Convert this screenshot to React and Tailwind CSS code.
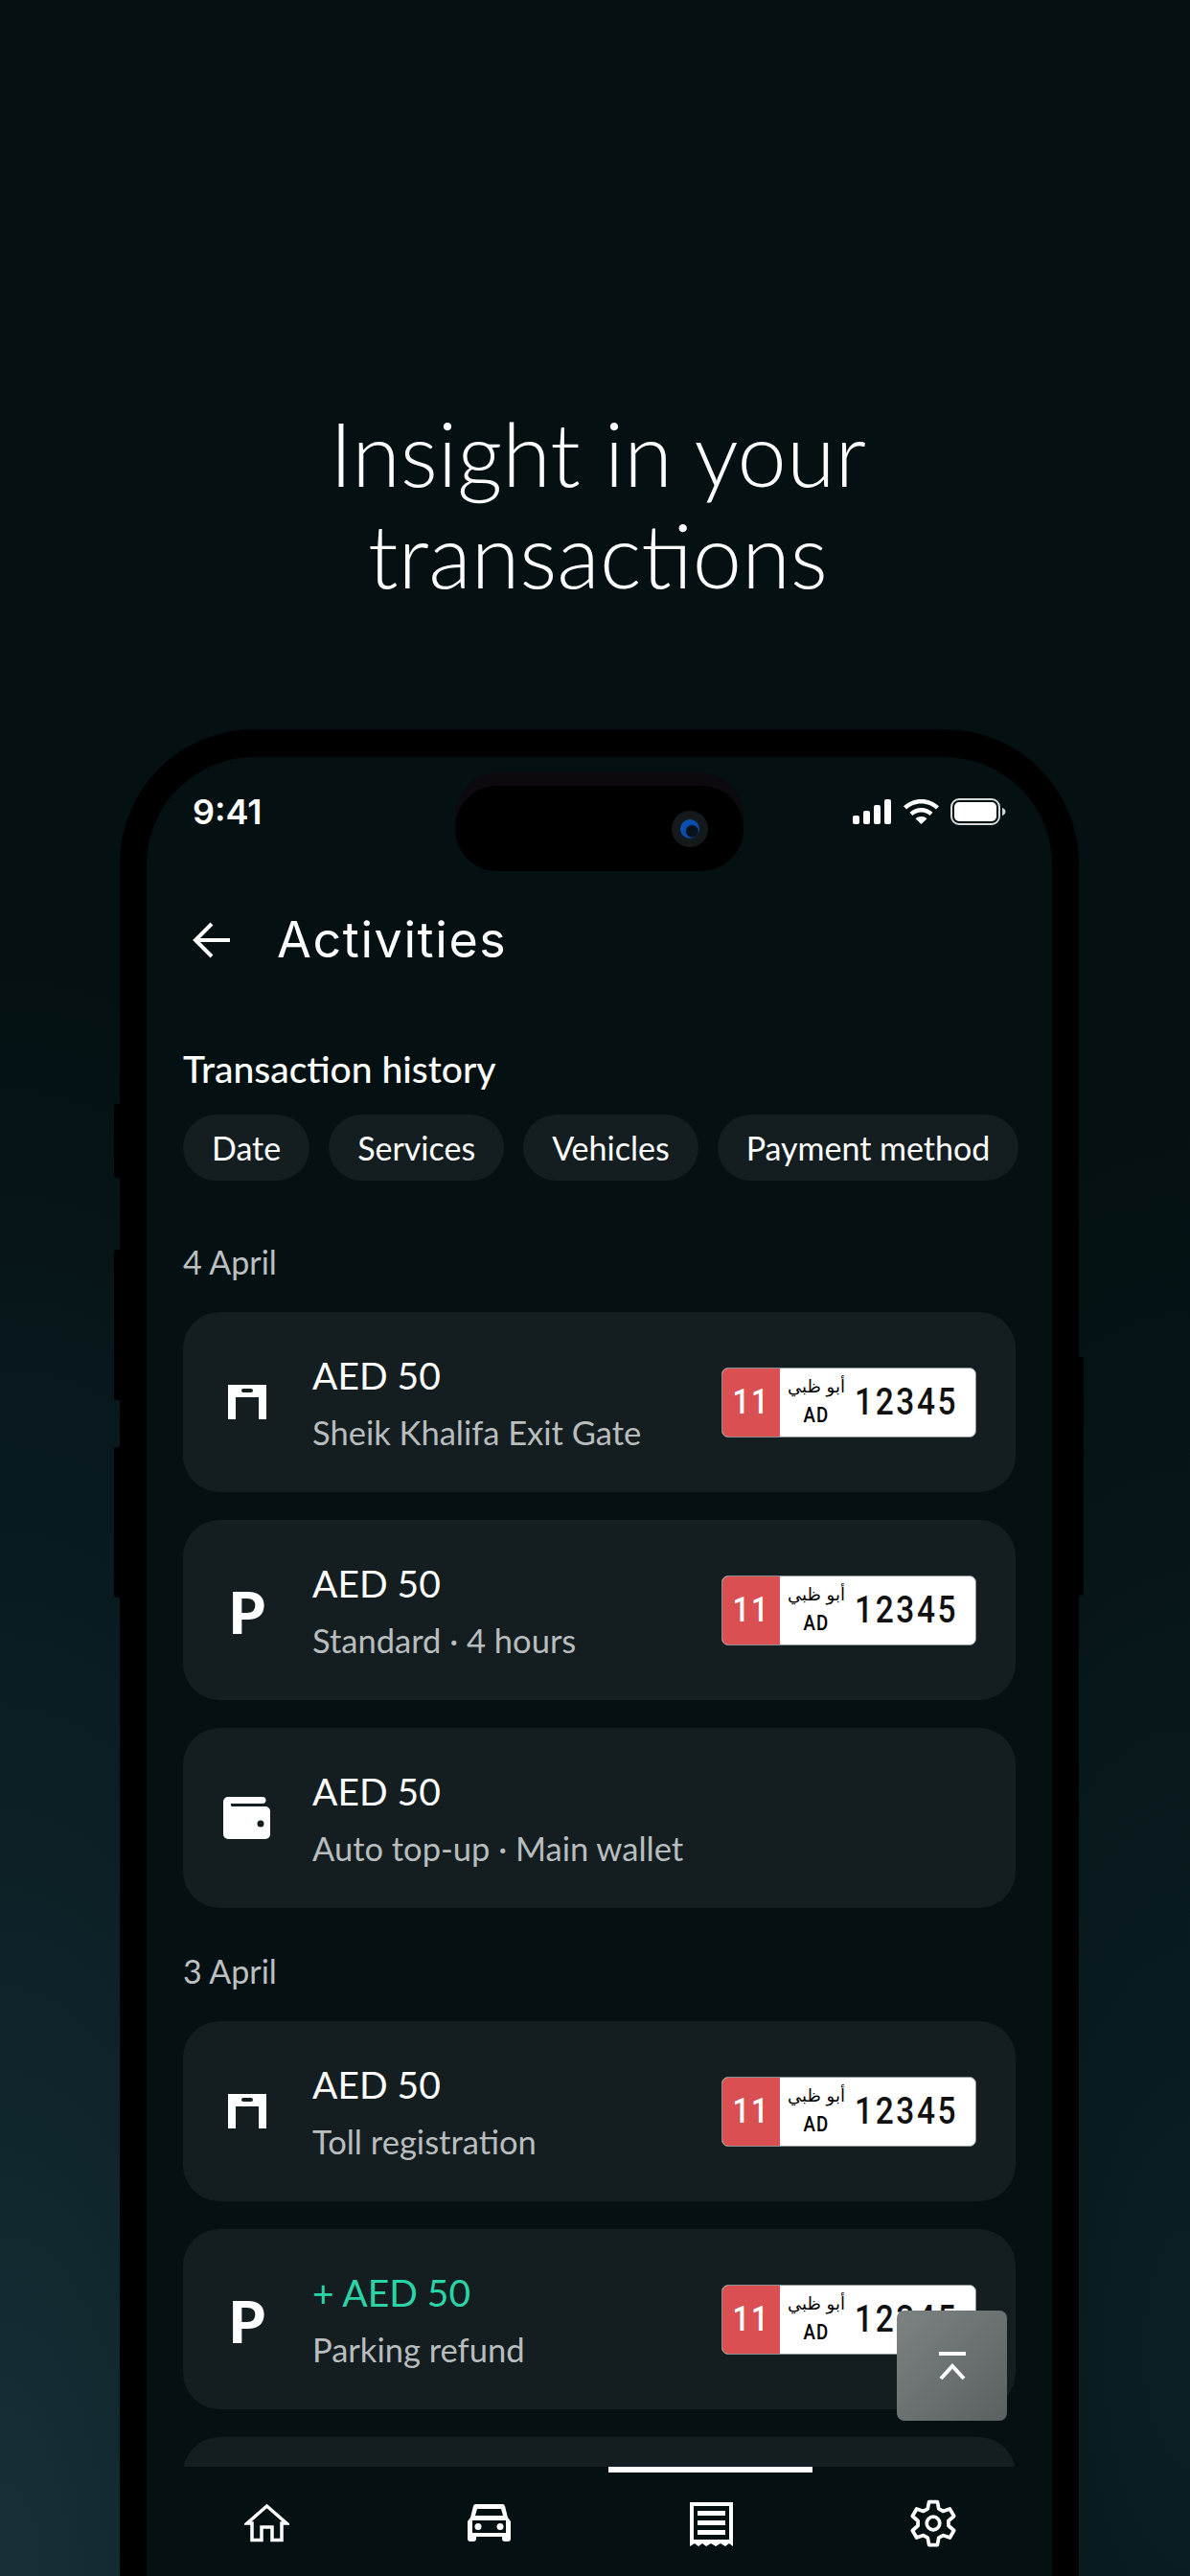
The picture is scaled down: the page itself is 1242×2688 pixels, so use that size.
import React from "react";

const groups = [
  {
    date: "4 April",
    mt: "mt-[64px]",
    items: [
      { icon: "gate", amount: "AED 50", sub: "Sheik Khalifa Exit Gate", plate: true },
      { icon: "p", amount: "AED 50", sub: "Standard · 4 hours", plate: true },
      { icon: "wallet", amount: "AED 50", sub: "Auto top-up · Main wallet" },
    ],
  },
  {
    date: "3 April",
    mt: "mt-[45px]",
    items: [
      { icon: "gate", amount: "AED 50", sub: "Toll registration", plate: true },
      { icon: "p", amount: "+ AED 50", sub: "Parking refund", plate: true, refund: true },
      { icon: "none" },
    ],
  },
];

const chips = ["Date", "Services", "Vehicles", "Payment method"];

// 6 tooth gear outline, points worked out from the angles
const gearPoints = () => {
  const pts = [];
  for (let i = 0; i < 6; i++) {
    const a = -90 + i * 60;
    [
      [a - 21, 15.5],
      [a - 11, 22],
      [a + 11, 22],
      [a + 21, 15.5],
    ].forEach(([deg, r]) => {
      const rad = (deg * Math.PI) / 180;
      pts.push(`${(24 + r * Math.cos(rad)).toFixed(2)},${(24 + r * Math.sin(rad)).toFixed(2)}`);
    });
  }
  return pts.join(" ");
};

const GateIcon = () => (
  <svg width="40" height="36" viewBox="0 0 40 36" fill="none">
    <path fillRule="evenodd" d="M0 0h40v36h-8V13H8v23H0z" fill="#fff" />
    <rect x="14" y="4" width="12" height="4" rx="2" fill="#141e20" />
  </svg>
);

const WalletIcon = () => (
  <svg width="49" height="44" viewBox="0 0 49 44" fill="none">
    <path
      d="M5 0h36a3 3 0 0 1 0 7H8v1.500a1.500 1.500 0 0 0 1.500 1.500H44a5 5 0 0 1 5 5v24a5 5 0 0 1-5 5H5a5 5 0 0 1-5-5V5a5 5 0 0 1 5-5z"
      fill="#fff"
    />
    <circle cx="39" cy="28" r="3.5" fill="#141e20" />
  </svg>
);

const ItemIcon = ({ type }) => {
  if (type === "gate") return <GateIcon />;
  if (type === "wallet") return <WalletIcon />;
  if (type === "p")
    return (
      <span className="font-['Lato',sans-serif] font-black text-[61px] leading-none text-white pt-[2px]">
        P
      </span>
    );
  return null;
};

const Plate = () => (
  <div className="flex w-[266px] h-[73px] rounded-[7px] overflow-hidden border border-[#8a8f90] bg-white shrink-0 font-['Roboto',sans-serif]">
    <div className="w-[60px] bg-[#d94f52] flex items-center justify-center text-white font-medium text-[37px]">
      <span className="scale-x-[.85] tracking-[2px]">11</span>
    </div>
    <div className="w-[76px] flex flex-col items-center text-black pt-[6px]">
      <span className="font-['DejaVu_Sans',sans-serif] text-[18px] leading-[26px]" dir="rtl">
        أبو ظبي
      </span>
      <span className="font-medium text-[22px] leading-[26px] mt-[4px] tracking-[1.5px] scale-x-[.85]">
        AD
      </span>
    </div>
    <div className="ml-[2px] font-medium text-[38px] tracking-[3px] text-[#111] flex items-center">
      <span className="inline-block origin-left scale-x-[.88]">12345</span>
    </div>
  </div>
);

const Card = ({ item }) => (
  <div className="h-[188px] rounded-[38px] bg-[#141e20] flex items-center pr-[41px]">
    <div className="w-[135px] pr-[2px] flex justify-center shrink-0">
      <ItemIcon type={item.icon} />
    </div>
    {item.amount && (
      <div className="flex-1 pt-[2px]">
        <p className={`text-[39px] leading-[46px] ${item.refund ? "text-[#2bd4a6]" : "text-white"}`}>
          {item.amount}
        </p>
        <p className="text-[34.5px] leading-[42px] mt-[16px] text-[#b9bdbe]">{item.sub}</p>
      </div>
    )}
    {item.plate && <Plate />}
  </div>
);

const HomeIcon = () => (
  <svg width="47" height="41" viewBox="0 0 47 41" fill="none" stroke="#fff" strokeWidth="3.5">
    <path d="M3 21H8V38.500H18V25H29V38.500H39V21H44L23.500 3z" />
  </svg>
);

const CarIcon = () => (
  <svg width="45" height="39" viewBox="0 0 45 39" fill="none">
    <path
      fillRule="evenodd"
      d="M9 0H36a3 3 0 0 1 3 2L42 14l3 4v18a3 3 0 0 1-3 3h-3a3 3 0 0 1-3-3v-2H9v2a3 3 0 0 1-3 3H3a3 3 0 0 1-3-3V18l3-4L6 2a3 3 0 0 1 3-2zM10 5 8 12H37L35 5zM5 17V30H40V17z"
      fill="#fff"
    />
    <circle cx="11" cy="23.500" r="3.5" fill="#fff" />
    <circle cx="34" cy="23.500" r="3.5" fill="#fff" />
  </svg>
);

const ReceiptIcon = () => (
  <svg width="45" height="46" viewBox="0 0 45 46" fill="none">
    <path
      fillRule="evenodd"
      d="M0 0h45v46l-4-3-4 3-5-3-5 3-5-3-5 3-4-3-4 3-4-3-5 3zM4 4v35h37V4zM8 9h29v5H8zM8 19h29v5H8zM8 29h29v5H8z"
      fill="#fff"
    />
  </svg>
);

const GearIcon = () => (
  <svg width="50" height="50" viewBox="0 0 48 48" fill="none" stroke="#fff" strokeWidth="3.6" strokeLinejoin="round">
    <polygon points={gearPoints()} />
    <circle cx="24" cy="24" r="6.5" />
  </svg>
);

export default function App() {
  return (
    <div className="relative w-[1242px] h-[2688px] overflow-hidden bg-[#041012] bg-[radial-gradient(ellipse_700px_1700px_at_0px_2688px,#173038_0%,#0c2026_45%,#04101200_100%),radial-gradient(ellipse_500px_1300px_at_1242px_2450px,#0c1f24_0%,#04101200_100%)] font-['Lato',sans-serif]">
      <h1 className="pt-[420px] pl-[6px] text-center text-white font-light text-[92px] leading-[106px]">
        Insight in your
        <br />
        transactions
      </h1>

      {/* phone */}
      <div className="relative ml-[125px] mt-[129px] w-[1001px] h-[1929px] bg-black rounded-t-[140px] pt-[29px] px-[28px]">
        <span className="absolute left-[-6px] top-[391px] w-[6px] h-[77px] bg-black rounded-l-[3px]" />
        <span className="absolute left-[-6px] top-[543px] w-[6px] h-[157px] bg-black rounded-l-[3px]" />
        <span className="absolute left-[-6px] top-[749px] w-[6px] h-[157px] bg-black rounded-l-[3px]" />
        <span className="absolute right-[-5px] top-[655px] w-[5px] h-[249px] bg-black rounded-r-[3px]" />

        <div className="relative h-full flex flex-col bg-[#041012] rounded-t-[112px] overflow-hidden">
          {/* dynamic island */}
          <div className="absolute left-[322px] top-[16px] w-[301px] h-[103px] rounded-[46px] bg-[#0c0a0f]" />
          <div className="absolute left-[322px] top-[30px] w-[301px] h-[89px] rounded-[44px] bg-black" />
          <div className="absolute left-[548px] top-[56px] w-[38px] h-[38px] rounded-full bg-[#14191c] flex items-center justify-center">
            <span className="w-[20px] h-[20px] rounded-full bg-[radial-gradient(circle_at_62%_62%,#07121c_32%,#0a4fb0_42%)]" />
          </div>

          {/* status bar */}
          <div className="h-[34px] mt-[40px] px-[48px] flex items-center justify-between">
            <span className="font-['Inter',sans-serif] font-semibold text-[36px] leading-none text-white">9:41</span>
            <div className="flex items-center gap-[12px]">
              <svg width="41" height="26" viewBox="0 0 41 26" fill="#fff">
                <rect x="0" y="17" width="7" height="9" rx="2" />
                <rect x="11" y="12" width="7" height="14" rx="2" />
                <rect x="22" y="6" width="7" height="20" rx="2" />
                <rect x="33" y="0" width="7" height="26" rx="2" />
              </svg>
              <svg width="37" height="26" viewBox="0 0 37 26" fill="#fff">
                <path d="M18.500 0C25.500 0 32 2.700 37 7.300l-3 3.200C30 6.700 24.500 4.500 18.500 4.500S7 6.700 3 10.500L0 7.300C5 2.700 11.500 0 18.500 0z" />
                <path d="M18.500 9c4.500 0 8.800 1.700 12 4.700l-3 3.200c-2.400-2.200-5.600-3.500-9-3.500s-6.600 1.300-9 3.500l-3-3.200C9.700 10.700 14 9 18.500 9z" />
                <path d="M18.500 18c2.300 0 4.400.8 6 2.300l-6 5.700-6-5.700c1.600-1.500 3.700-2.300 6-2.300z" />
              </svg>
              <svg width="58" height="28" viewBox="0 0 58 28" fill="none">
                <rect x="1" y="1" width="50" height="26" rx="8" stroke="#fff" strokeOpacity="0.85" strokeWidth="2" />
                <rect x="4" y="4" width="44" height="20" rx="5" fill="#fff" />
                <path d="M54 10c2 .5 3.500 2 3.500 4s-1.500 3.500-3.500 4z" fill="#fff" fillOpacity="0.8" />
              </svg>
            </div>
          </div>

          {/* header */}
          <div className="mt-[97px] ml-[48px] h-[40px] flex items-center gap-[49px]">
            <svg width="39" height="38" viewBox="0 0 39 38" fill="none" stroke="#fff" strokeWidth="4">
              <path d="M39 19H3M20 2 3 19l17 17" />
            </svg>
            <span className="font-['Inter',sans-serif] text-[52px] tracking-[1.6px] leading-none text-white">Activities</span>
          </div>

          {/* list */}
          <div className="flex-1 min-h-0 overflow-hidden mt-[92px] px-[38px]">
            <h2 className="text-[39px] leading-[44px] font-medium text-white">Transaction history</h2>
            <div className="flex gap-[20px] mt-[26px]">
              {chips.map((chip) => (
                <div
                  key={chip}
                  className="h-[69px] px-[30px] rounded-full bg-[#141e20] flex items-center text-[34px] text-white whitespace-nowrap"
                >
                  {chip}
                </div>
              ))}
            </div>
            {groups.map((group) => (
              <div key={group.date} className={group.mt}>
                <p className="text-[34px] leading-[42px] text-[#bcc0c1]">{group.date}</p>
                <div className="mt-[31px] flex flex-col gap-[29px]">
                  {group.items.map((item, i) => (
                    <Card key={i} item={item} />
                  ))}
                </div>
              </div>
            ))}
          </div>

          {/* tab bar */}
          <div className="relative h-[116px] shrink-0 bg-[#041012] grid grid-cols-4 pl-[9px] pr-[8px] pt-[34px]">
            <span className="absolute left-[482px] top-0 w-[213px] h-[6px] bg-white" />
            <div className="flex justify-center items-start pt-[4px]">
              <HomeIcon />
            </div>
            <div className="flex justify-center items-start pt-[5px]">
              <CarIcon />
            </div>
            <div className="flex justify-center items-start pt-[3px]">
              <ReceiptIcon />
            </div>
            <div className="flex justify-center items-start">
              <GearIcon />
            </div>
          </div>

          {/* scroll to top */}
          <button className="absolute left-[783px] top-[1621px] w-[115px] h-[115px] rounded-[8px] bg-gradient-to-br from-[#7d8383] to-[#5b6161] flex items-center justify-center">
            <svg width="30" height="30" viewBox="0 0 30 30" fill="none" stroke="#fff" strokeWidth="4">
              <path d="M1 2h28M3 28 15 15l12 13" />
            </svg>
          </button>
        </div>
      </div>
    </div>
  );
}
